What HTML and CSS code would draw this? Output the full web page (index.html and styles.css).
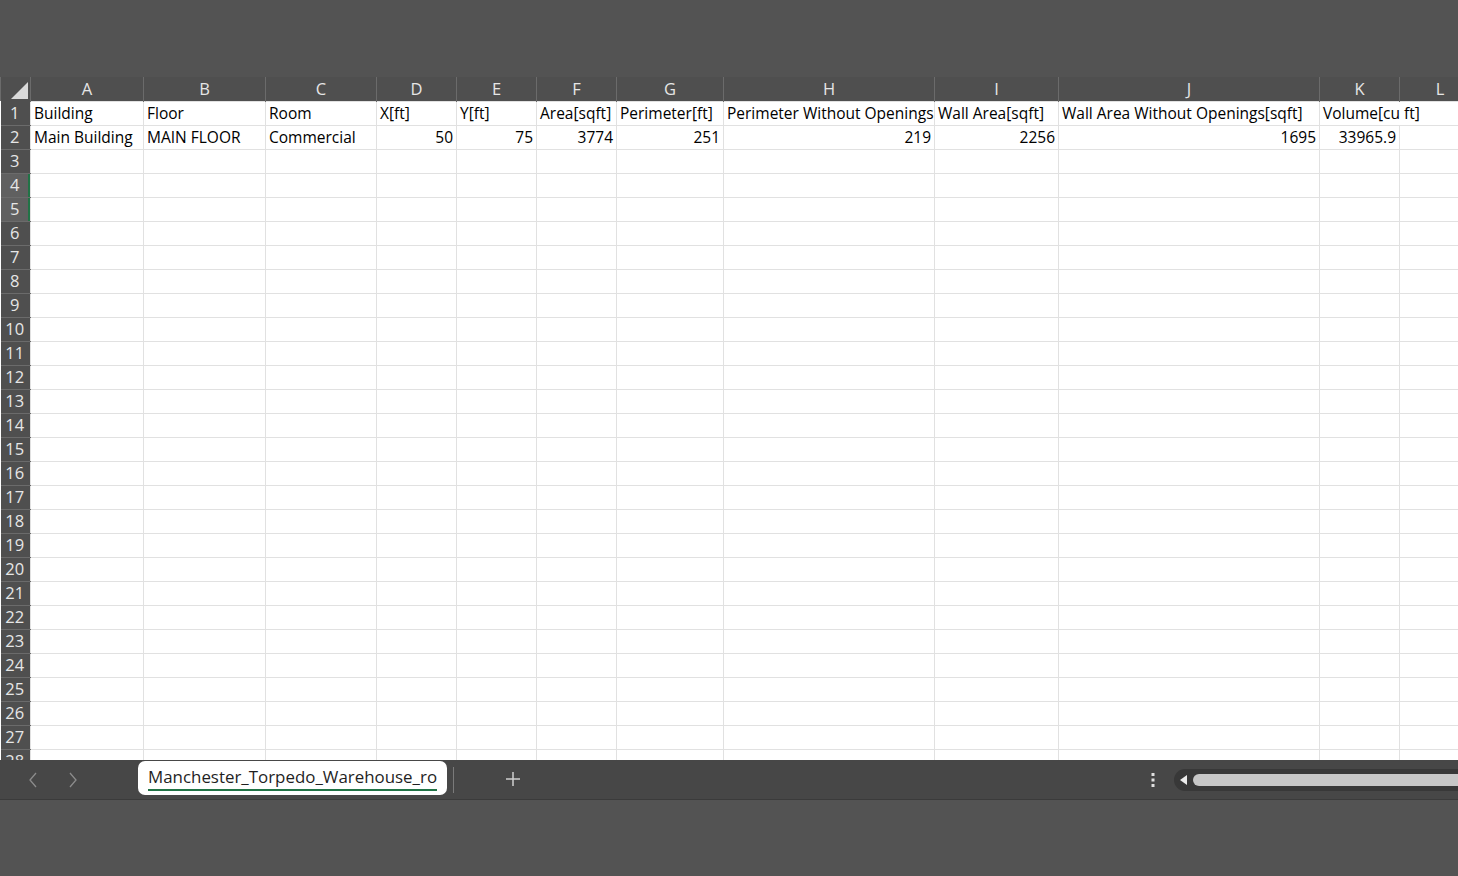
FILE: index.html
```html
<!DOCTYPE html>
<html lang="en">
<head>
    <meta charset="UTF-8">
    <meta name="viewport" content="width=device-width, initial-scale=1.0">
    <title>Manchester_Torpedo_Warehouse_rooms</title>
    <link rel="stylesheet" href="styles.css">
</head>
<body>
    <div class="ribbon-space"></div>

    <div class="sheet">
        <table class="grid">
            <colgroup>
                <col class="c-rh">
                <col class="c-a">
                <col class="c-b">
                <col class="c-c">
                <col class="c-d">
                <col class="c-e">
                <col class="c-f">
                <col class="c-g">
                <col class="c-h">
                <col class="c-i">
                <col class="c-j">
                <col class="c-k">
                <col class="c-l">
            </colgroup>
            <thead>
                <tr>
                    <th class="corner"><span class="corner-tri"></span></th>
                    <th>A</th><th>B</th><th>C</th><th>D</th><th>E</th><th>F</th>
                    <th>G</th><th>H</th><th>I</th><th>J</th><th>K</th><th>L</th>
                </tr>
            </thead>
            <tbody>
                <tr>
                    <th>1</th>
                    <td>Building</td><td>Floor</td><td>Room</td><td>X[ft]</td><td>Y[ft]</td>
                    <td>Area[sqft]</td><td>Perimeter[ft]</td><td>Perimeter Without Openings</td>
                    <td>Wall Area[sqft]</td><td>Wall Area Without Openings[sqft]</td><td class="spill">Volume[cu ft]</td><td class="spilled"></td>
                </tr>
                <tr>
                    <th>2</th>
                    <td>Main Building</td><td>MAIN FLOOR</td><td>Commercial</td>
                    <td class="num">50</td><td class="num">75</td><td class="num">3774</td>
                    <td class="num">251</td><td class="num">219</td><td class="num">2256</td>
                    <td class="num">1695</td><td class="num">33965.9</td><td></td>
                </tr>
                <tr><th>3</th><td></td><td></td><td></td><td></td><td></td><td></td><td></td><td></td><td></td><td></td><td></td><td></td></tr>
                <tr><th class="sel">4</th><td></td><td></td><td></td><td></td><td></td><td></td><td></td><td></td><td></td><td></td><td></td><td></td></tr>
                <tr><th class="sel">5</th><td></td><td></td><td></td><td></td><td></td><td></td><td></td><td></td><td></td><td></td><td></td><td></td></tr>
                <tr><th>6</th><td></td><td></td><td></td><td></td><td></td><td></td><td></td><td></td><td></td><td></td><td></td><td></td></tr>
                <tr><th>7</th><td></td><td></td><td></td><td></td><td></td><td></td><td></td><td></td><td></td><td></td><td></td><td></td></tr>
                <tr><th>8</th><td></td><td></td><td></td><td></td><td></td><td></td><td></td><td></td><td></td><td></td><td></td><td></td></tr>
                <tr><th>9</th><td></td><td></td><td></td><td></td><td></td><td></td><td></td><td></td><td></td><td></td><td></td><td></td></tr>
                <tr><th>10</th><td></td><td></td><td></td><td></td><td></td><td></td><td></td><td></td><td></td><td></td><td></td><td></td></tr>
                <tr><th>11</th><td></td><td></td><td></td><td></td><td></td><td></td><td></td><td></td><td></td><td></td><td></td><td></td></tr>
                <tr><th>12</th><td></td><td></td><td></td><td></td><td></td><td></td><td></td><td></td><td></td><td></td><td></td><td></td></tr>
                <tr><th>13</th><td></td><td></td><td></td><td></td><td></td><td></td><td></td><td></td><td></td><td></td><td></td><td></td></tr>
                <tr><th>14</th><td></td><td></td><td></td><td></td><td></td><td></td><td></td><td></td><td></td><td></td><td></td><td></td></tr>
                <tr><th>15</th><td></td><td></td><td></td><td></td><td></td><td></td><td></td><td></td><td></td><td></td><td></td><td></td></tr>
                <tr><th>16</th><td></td><td></td><td></td><td></td><td></td><td></td><td></td><td></td><td></td><td></td><td></td><td></td></tr>
                <tr><th>17</th><td></td><td></td><td></td><td></td><td></td><td></td><td></td><td></td><td></td><td></td><td></td><td></td></tr>
                <tr><th>18</th><td></td><td></td><td></td><td></td><td></td><td></td><td></td><td></td><td></td><td></td><td></td><td></td></tr>
                <tr><th>19</th><td></td><td></td><td></td><td></td><td></td><td></td><td></td><td></td><td></td><td></td><td></td><td></td></tr>
                <tr><th>20</th><td></td><td></td><td></td><td></td><td></td><td></td><td></td><td></td><td></td><td></td><td></td><td></td></tr>
                <tr><th>21</th><td></td><td></td><td></td><td></td><td></td><td></td><td></td><td></td><td></td><td></td><td></td><td></td></tr>
                <tr><th>22</th><td></td><td></td><td></td><td></td><td></td><td></td><td></td><td></td><td></td><td></td><td></td><td></td></tr>
                <tr><th>23</th><td></td><td></td><td></td><td></td><td></td><td></td><td></td><td></td><td></td><td></td><td></td><td></td></tr>
                <tr><th>24</th><td></td><td></td><td></td><td></td><td></td><td></td><td></td><td></td><td></td><td></td><td></td><td></td></tr>
                <tr><th>25</th><td></td><td></td><td></td><td></td><td></td><td></td><td></td><td></td><td></td><td></td><td></td><td></td></tr>
                <tr><th>26</th><td></td><td></td><td></td><td></td><td></td><td></td><td></td><td></td><td></td><td></td><td></td><td></td></tr>
                <tr><th>27</th><td></td><td></td><td></td><td></td><td></td><td></td><td></td><td></td><td></td><td></td><td></td><td></td></tr>
                <tr><th>28</th><td></td><td></td><td></td><td></td><td></td><td></td><td></td><td></td><td></td><td></td><td></td><td></td></tr>
            </tbody>
        </table>
    </div>

    <div class="tabbar">
        <div class="tab-nav">
            <button class="nav-btn" aria-label="Previous sheet">
                <svg width="10" height="16" viewBox="0 0 10 16"><path d="M8 1 L2 8 L8 15" fill="none" stroke="currentColor" stroke-width="1.3"/></svg>
            </button>
            <button class="nav-btn" aria-label="Next sheet">
                <svg width="10" height="16" viewBox="0 0 10 16"><path d="M2 1 L8 8 L2 15" fill="none" stroke="currentColor" stroke-width="1.3"/></svg>
            </button>
        </div>
        <div class="tab active"><span class="tab-label">Manchester_Torpedo_Warehouse_ro</span></div>
        <div class="tab-sep"></div>
        <button class="add-sheet" aria-label="New sheet">
            <svg width="16" height="16" viewBox="0 0 16 16"><path d="M8 1 V15 M1 8 H15" fill="none" stroke="currentColor" stroke-width="1.5"/></svg>
        </button>
        <div class="tab-spacer"></div>
        <div class="more-dots">
            <svg width="4" height="16" viewBox="0 0 4 16"><rect x="0.5" y="1" width="3" height="3"/><rect x="0.5" y="6.5" width="3" height="3"/><rect x="0.5" y="12" width="3" height="3"/></svg>
        </div>
        <div class="hscroll">
            <svg class="hscroll-arrow" width="8" height="10" viewBox="0 0 8 10"><path d="M7 0 V10 L0 5 Z"/></svg>
            <div class="hscroll-thumb"></div>
        </div>
    </div>

    <div class="status-space"></div>
</body>
</html>
```

FILE: styles.css
```css
:root {
    --chrome: #535353;
    --header-bg: #4f4f4f;
    --header-text: #e6e6e6;
    --header-line: #6b6b6b;
    --grid-line: #e1e1e1;
    --excel-green: #217346;
    --tabbar-bg: #474747;
}

* {
    box-sizing: border-box;
    margin: 0;
    padding: 0;
}

body {
    background-color: var(--chrome);
    font-family: 'Open Sans', 'Liberation Sans', sans-serif;
    width: 1458px;
    height: 876px;
    overflow: hidden;
}

.ribbon-space {
    height: 77px;
}

.sheet {
    height: 683px;
    overflow: hidden;
    background-color: #fff;
}

.grid {
    border-collapse: collapse;
    table-layout: fixed;
    width: 1480px;
}

.c-rh { width: 30px; }
.c-a { width: 113px; }
.c-b { width: 122px; }
.c-c { width: 111px; }
.c-d { width: 80px; }
.c-e { width: 80px; }
.c-f { width: 80px; }
.c-g { width: 107px; }
.c-h { width: 211px; }
.c-i { width: 124px; }
.c-j { width: 261px; }
.c-k { width: 80px; }
.c-l { width: 81px; }

.grid tr {
    height: 24px;
}

.grid th {
    background-color: var(--header-bg);
    color: var(--header-text);
    font-weight: 400;
    font-size: 16.5px;
    text-align: center;
    border: 1px solid var(--header-line);
    border-top: none;
    padding: 0;
    line-height: 22px;
}

.grid thead th {
    border-bottom: none;
    border-top: none;
}

.grid tbody th {
    border-left: none;
    border-right: none;
    padding-right: 1px;
}

.grid th.sel {
    background-color: #606060;
    box-shadow: inset -2px 0 0 var(--excel-green);
}

.corner {
    position: relative;
}

.corner-tri {
    position: absolute;
    right: 2px;
    bottom: 2px;
    width: 0;
    height: 0;
    border-left: 17px solid transparent;
    border-bottom: 17px solid #d9d9d9;
}

.grid td {
    border: 1px solid var(--grid-line);
    color: #000;
    font-size: 15.5px;
    padding: 0 3px 0 3px;
    white-space: nowrap;
    overflow: hidden;
    line-height: 22px;
}

.grid td.num {
    text-align: right;
}

/* text running on into the empty cell beside it */
.grid td.spill {
    overflow: visible;
    border-right: hidden;
}

.grid td.spilled {
    border-left: hidden;
}

/* sheet tabs */
.tabbar {
    height: 40px;
    background-color: var(--tabbar-bg);
    border-bottom: 1px solid #3b3b3b;
    display: flex;
    align-items: flex-start;
}

.tab-nav {
    display: flex;
    gap: 20px;
    padding: 10px 0 0 23px;
    width: 138px;
}

.nav-btn {
    background: none;
    border: none;
    color: #8c8c8c;
    width: 20px;
    height: 20px;
    display: flex;
    align-items: center;
    justify-content: center;
}

.tab {
    background-color: #fff;
    height: 34px;
    margin-top: 1px;
    border-radius: 7px;
    padding: 5px 10px 0 10px;
    width: 309px;
}

.tab-label {
    display: inline-block;
    color: #1f1f1f;
    font-size: 16.9px;
    line-height: 22px;
    border-bottom: 2px solid var(--excel-green);
    padding-bottom: 1px;
    white-space: nowrap;
}

.tab-sep {
    width: 1px;
    height: 26px;
    margin: 7px 0 0 6px;
    background-color: #7a7a7a;
}

.add-sheet {
    background: none;
    border: none;
    color: #d0d0d0;
    margin: 11px 0 0 51px;
    width: 16px;
    height: 16px;
    display: flex;
}

.tab-spacer {
    flex: 1;
}

.more-dots {
    fill: #e0e0e0;
    margin: 12px 19px 0 0;
    display: flex;
}

.hscroll {
    width: 284px;
    height: 22px;
    margin-top: 9px;
    background-color: #383838;
    border-radius: 11px 0 0 11px;
    display: flex;
    align-items: center;
    padding-left: 6px;
    gap: 5px;
}

.hscroll-arrow {
    fill: #ececec;
}

.hscroll-thumb {
    flex: 1;
    height: 12px;
    background-color: #c7c7c7;
    border-radius: 6px 0 0 6px;
}

.status-space {
    height: 75px;
}
```
